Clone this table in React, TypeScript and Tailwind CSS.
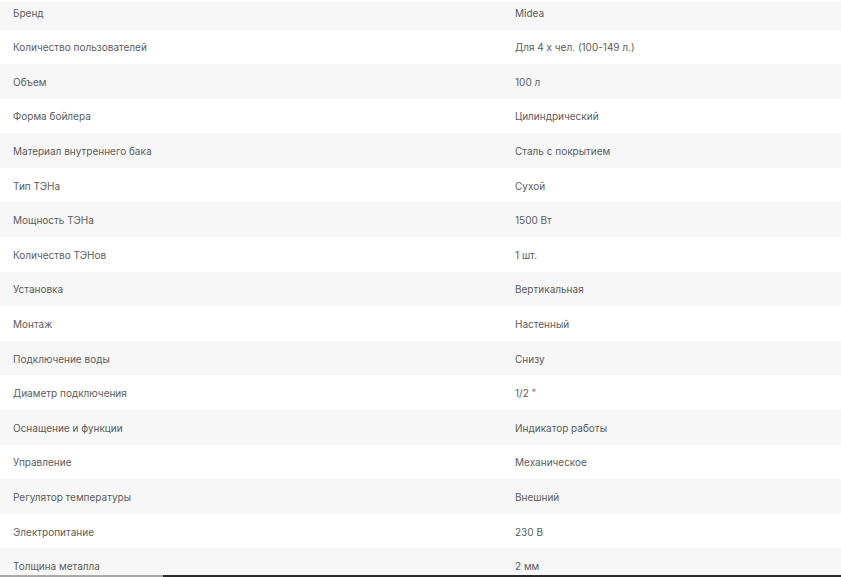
import React from 'react';

const specs: [string, string][] = [
  ['Бренд', 'Midea'],
  ['Количество пользователей', 'Для 4 х чел. (100-149 л.)'],
  ['Объем', '100 л'],
  ['Форма бойлера', 'Цилиндрический'],
  ['Материал внутреннего бака', 'Сталь с покрытием'],
  ['Тип ТЭНа', 'Сухой'],
  ['Мощность ТЭНа', '1500 Вт'],
  ['Количество ТЭНов', '1 шт.'],
  ['Установка', 'Вертикальная'],
  ['Монтаж', 'Настенный'],
  ['Подключение воды', 'Снизу'],
  ['Диаметр подключения', '1/2 "'],
  ['Оснащение и функции', 'Индикатор работы'],
  ['Управление', 'Механическое'],
  ['Регулятор температуры', 'Внешний'],
  ['Электропитание', '230 В'],
  ['Толщина металла', '2 мм'],
];

export default function App() {
  return (
    <div
      className="h-[577px] w-[841px] flex flex-col bg-white text-[10px] text-[#5c5c5c]"
      style={{ fontFamily: 'Inter, "Noto Sans", sans-serif' }}
    >
      {/* Spec table, scrolled so the first row is clipped */}
      <div className="flex-1 overflow-hidden pt-[2px]">
        {specs.map(([label, value], i) => (
          <div
            key={label}
            className={`flex ${i === 0 ? 'h-[27.5px] items-start pt-[1px]' : 'h-[34.6px] items-center pt-[1px]'} ${
              i % 2 === 0 ? 'bg-[#f7f7f7]' : 'bg-white'
            }`}
          >
            <div className="w-[515px] pl-[13px] leading-[20px]">{label}</div>
            <div className="flex-1 leading-[20px]">{value}</div>
          </div>
        ))}
      </div>
      <div className="flex h-[2px]">
        <div className="w-[163px] bg-[#a9a9a9]" />
        <div className="flex-1 bg-[#2e2a2a]" />
      </div>
    </div>
  );
}
